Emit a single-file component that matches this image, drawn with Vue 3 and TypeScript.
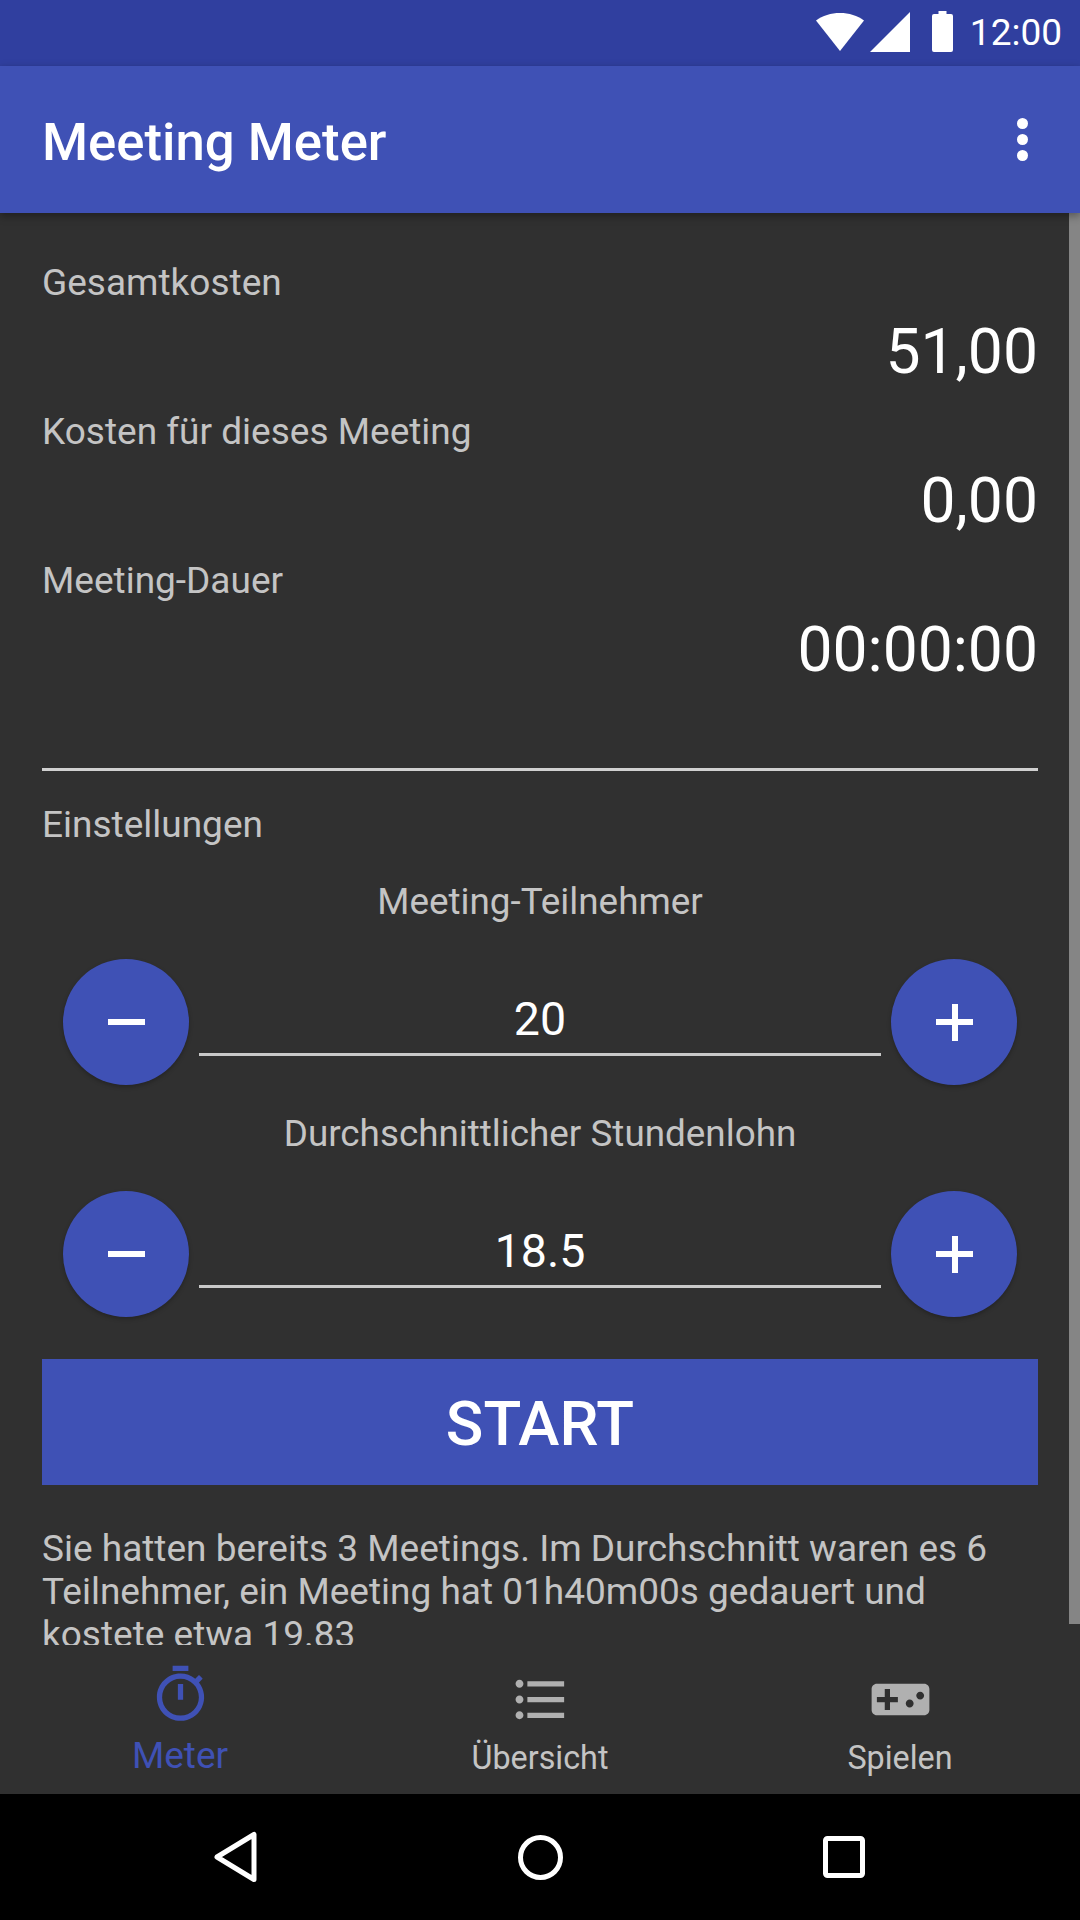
<script setup lang="ts">
const stats = [
  { label: 'Gesamtkosten', value: '51,00' },
  { label: 'Kosten für dieses Meeting', value: '0,00' },
  { label: 'Meeting-Dauer', value: '00:00:00' },
]
const settings = [
  { label: 'Meeting-Teilnehmer', value: '20' },
  { label: 'Durchschnittlicher Stundenlohn', value: '18.5' },
]
</script>

<template>
  <div class="screen">
    <div class="status">
      <svg class="wifi" width="48" height="38" viewBox="0 0 48 38"><path d="M0 7.500C6.500 2.500 15 0 24 0s17.500 2.500 24 7.500L24 38z" fill="#fff" /></svg>
      <svg class="signal" width="40" height="40" viewBox="0 0 40 40"><path d="M40 0v40H0z" fill="#fff" /></svg>
      <svg class="battery" width="21" height="41" viewBox="0 0 21 41"><path d="M6.500 0h8v3H19a2 2 0 0 1 2 2v34a2 2 0 0 1-2 2H2a2 2 0 0 1-2-2V5a2 2 0 0 1 2-2h4.500z" fill="#fff" /></svg>
      <span class="clock">12:00</span>
    </div>
    <header class="appbar">
      <span class="title">Meeting Meter</span>
      <span class="dots"><i></i><i></i><i></i></span>
    </header>
    <main class="content">
      <div class="scrollbar"></div>
      <section v-for="s in stats" :key="s.label" class="stat">
        <div class="label">{{ s.label }}</div>
        <div class="value">{{ s.value }}</div>
      </section>
      <div class="divider"></div>
      <div class="label settings-title">Einstellungen</div>
      <section v-for="s in settings" :key="s.label" class="setting">
        <div class="label setting-label">{{ s.label }}</div>
        <div class="stepper">
          <button class="fab"><span class="minus"></span></button>
          <div class="field">{{ s.value }}</div>
          <button class="fab"><span class="minus"></span><span class="vert"></span></button>
        </div>
      </section>
      <button class="start">START</button>
      <p class="summary">Sie hatten bereits 3 Meetings. Im Durchschnitt waren es 6 Teilnehmer, ein Meeting hat 01h40m00s gedauert und kostete etwa 19.83</p>
    </main>
    <nav class="tabs">
      <div class="tab active">
        <svg width="63" height="63" viewBox="0 0 24 24"><path d="M15 1H9v2h6V1zm-4 13h2V8h-2v6zm8.030-6.610 1.420-1.420c-.43-.51-.9-.99-1.410-1.410l-1.420 1.420A8.962 8.962 0 0 0 12 4c-4.970 0-9 4.030-9 9s4.020 9 9 9a8.994 8.994 0 0 0 7.030-14.610zM12 20c-3.870 0-7-3.130-7-7s3.130-7 7-7 7 3.130 7 7-3.130 7-7 7z" fill="#3f51b5" /></svg>
        <span>Meter</span>
      </div>
      <div class="tab">
        <svg width="63" height="63" viewBox="0 0 24 24"><path d="M4 10.500c-.83 0-1.500.67-1.500 1.500s.67 1.500 1.500 1.500 1.500-.67 1.500-1.500-.67-1.500-1.500-1.500zm0-6c-.83 0-1.500.67-1.500 1.500S3.170 7.500 4 7.500 5.500 6.830 5.500 6 4.830 4.500 4 4.500zm0 12c-.83 0-1.500.68-1.500 1.500s.68 1.500 1.500 1.500 1.500-.68 1.500-1.500-.67-1.500-1.500-1.500zM7 19h14v-2H7v2zm0-6h14v-2H7v2zm0-8v2h14V5H7z" fill="#b0b0b0" /></svg>
        <span>Übersicht</span>
      </div>
      <div class="tab">
        <svg width="63" height="63" viewBox="0 0 24 24"><path d="M21 6H3c-1.100 0-2 .9-2 2v8c0 1.100.9 2 2 2h18c1.100 0 2-.9 2-2V8c0-1.100-.9-2-2-2zm-10 7H8v3H6v-3H3v-2h3V8h2v3h3v2zm4.500 2c-.83 0-1.500-.67-1.500-1.500s.67-1.500 1.500-1.500 1.500.67 1.500 1.500-.67 1.500-1.500 1.500zm4-3c-.83 0-1.500-.67-1.500-1.500S18.670 9 19.500 9s1.500.67 1.500 1.500-.67 1.500-1.500 1.500z" fill="#b0b0b0" /></svg>
        <span>Spielen</span>
      </div>
    </nav>
    <div class="sysnav">
      <svg width="44" height="52" viewBox="0 0 44 52"><path d="M40 3.500v45L3 26z" fill="none" stroke="#fff" stroke-width="5" stroke-linejoin="round" /></svg>
      <svg width="45" height="45" viewBox="0 0 45 45"><circle cx="22.500" cy="22.500" r="20" fill="none" stroke="#fff" stroke-width="5" /></svg>
      <svg width="42" height="42" viewBox="0 0 42 42"><rect x="2.500" y="2.500" width="37" height="37" rx="2" fill="none" stroke="#fff" stroke-width="5" /></svg>
    </div>
  </div>
</template>

<style>
html, body { margin: 0; background: #303030; }
</style>

<style scoped>
.screen {
  width: 1080px;
  height: 1920px;
  display: flex;
  flex-direction: column;
  overflow: hidden;
  font-family: Roboto, "Noto Sans", sans-serif;
  background: #303030;
}
.status {
  height: 66px;
  flex: none;
  background: #303f9f;
  display: flex;
  align-items: center;
  justify-content: flex-end;
  padding-right: 18px;
  box-sizing: border-box;
  color: #fff;
}
.wifi { margin-right: 6px; margin-top: -2px; }
.signal { margin-right: 22px; margin-top: -2px; }
.battery { margin-right: 17px; margin-top: -3px; }
.clock { font-size: 37px; line-height: 66px; }
.appbar {
  height: 147px;
  flex: none;
  background: #3f51b5;
  display: flex;
  align-items: center;
  justify-content: space-between;
  padding: 0 52px 0 42px;
  box-sizing: border-box;
  position: relative;
  z-index: 2;
  box-shadow: 0 3px 8px rgba(0, 0, 0, 0.35);
}
.title { font-size: 52.700px; font-weight: 500; color: #fff; margin-top: 5px; }
.dots { display: flex; flex-direction: column; gap: 5px; }
.dots i { display: block; width: 11px; height: 11px; border-radius: 50%; background: #fff; }
.content {
  flex: 1;
  min-height: 0;
  position: relative;
  overflow: hidden;
  padding: 43px 42px 0;
  box-sizing: border-box;
}
.scrollbar {
  position: absolute;
  right: 0;
  top: 0;
  width: 11px;
  height: 1411px;
  background: #858585;
}
.stat { height: 149px; }
.label { font-size: 37px; line-height: 54px; color: #c4c4c4; }
.value {
  font-size: 62.400px;
  line-height: 74px;
  color: #fff;
  text-align: right;
  margin-top: 5px;
}
.divider { height: 3px; background: #d0d0d0; margin-top: 65px; }
.settings-title { margin-top: 27px; padding-bottom: 1px; }
.setting-label { text-align: center; margin-top: 22px; font-size: 36.850px; }
.stepper {
  display: flex;
  align-items: flex-start;
  gap: 10px;
  padding: 0 21px;
  margin-top: 30px;
}
.fab {
  flex: none;
  width: 126px;
  height: 126px;
  border: 0;
  padding: 0;
  border-radius: 50%;
  background: #3f51b5;
  position: relative;
  box-shadow: 0 2px 4px rgba(0, 0, 0, 0.25);
}
.minus, .vert { position: absolute; background: #fff; }
.minus { left: 45px; top: 60px; width: 37px; height: 6px; }
.vert { left: 61px; top: 45px; width: 6px; height: 37px; }
.field {
  flex: 1;
  height: 97px;
  line-height: 120px;
  border-bottom: 3px solid #c8c8c8;
  text-align: center;
  font-size: 46.500px;
  color: #fff;
  box-sizing: border-box;
}
.start {
  display: block;
  width: 100%;
  height: 126px;
  margin-top: 42px;
  padding: 2px 0 0;
  border: 0;
  background: #3f51b5;
  color: #fff;
  font-family: inherit;
  font-size: 62px;
  font-weight: 500;
}
.summary {
  margin: 42px 0 0;
  font-size: 37px;
  line-height: 43px;
  color: #c4c4c4;
}
.tabs {
  height: 149px;
  flex: none;
  display: flex;
  background: #303030;
  position: relative;
}
.tab {
  flex: 1;
  display: flex;
  flex-direction: column;
  align-items: center;
  color: #c4c4c4;
  font-size: 32.300px;
  line-height: 40px;
  padding-top: 23px;
  box-sizing: border-box;
}
.tab span { margin-top: 7px; }
.tab.active { color: #3f51b5; font-size: 37px; padding-top: 18px; }
.tab.active span { margin-top: 10px; }
.sysnav {
  height: 126px;
  flex: none;
  background: #000;
  display: flex;
  align-items: center;
  justify-content: space-between;
  padding: 0 215px 0 214px;
}
</style>
